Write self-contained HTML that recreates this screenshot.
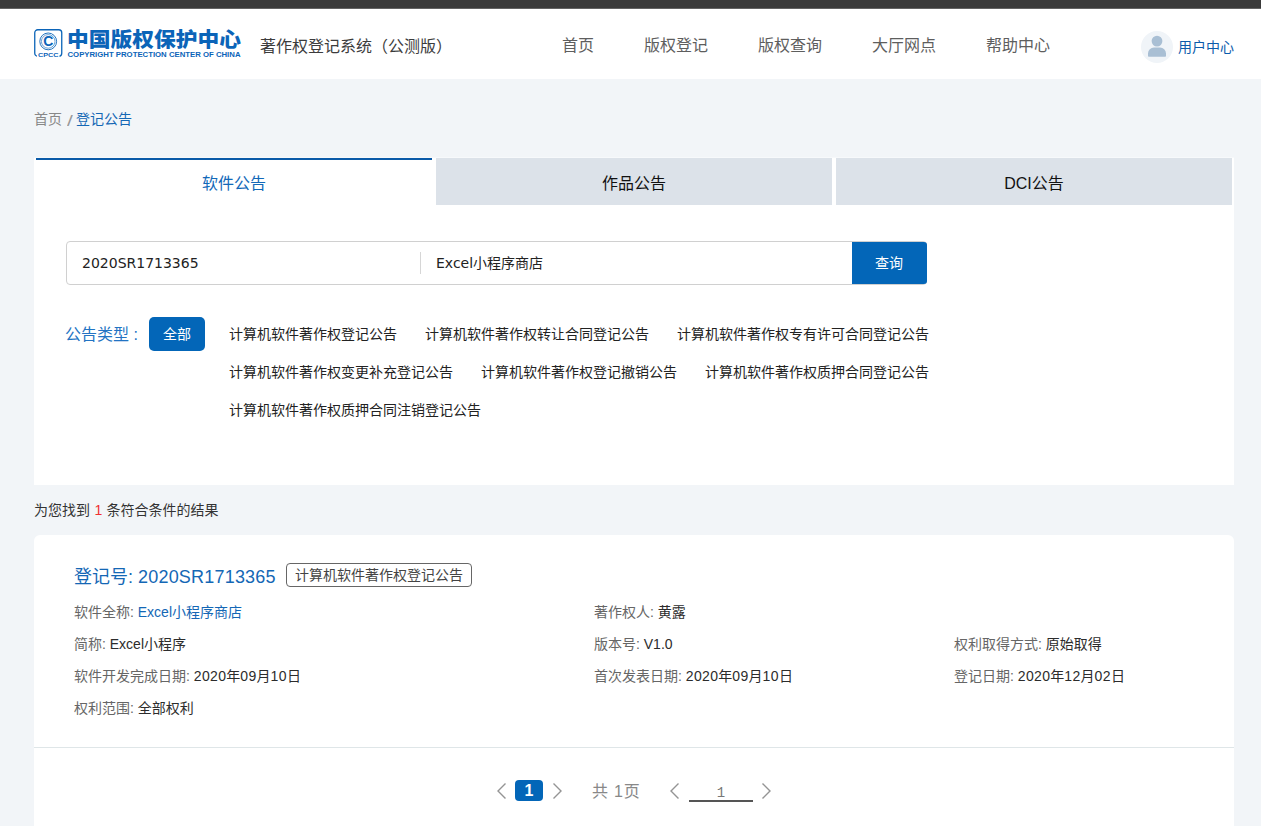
<!DOCTYPE html>
<html lang="zh-CN">
<head>
<meta charset="utf-8">
<title>登记公告 - 中国版权保护中心</title>
<style>
*{box-sizing:border-box;margin:0;padding:0}
html,body{width:1261px;height:826px;overflow:hidden}
body{background:#f2f5f8;font-family:"Liberation Sans","Noto Sans CJK SC",sans-serif;font-size:14px;color:#222;position:relative}
.abs{position:absolute;white-space:nowrap}
.topbar{left:0;top:0;width:1261px;height:9px;background:#3a3a3a;border-bottom:1px solid #636363}
.header{left:0;top:9px;width:1261px;height:70px;background:#fff}
.sys{left:260px;top:35px;font-size:16px;line-height:24px;color:#3c3c3c}
.nav{top:34px;font-size:16px;line-height:24px;color:#5e5e5e}
.avatar{left:1141px;top:31px;width:32px;height:32px;border-radius:50%;background:#f0f4f8;overflow:hidden}
.user{left:1178px;top:36px;font-size:14px;line-height:22px;color:#0b5bab}
.crumb{left:34px;top:108px;font-size:14px;line-height:22px;color:#888}
.crumb u{text-decoration:none;position:absolute;left:32.5px;top:1.5px;font-size:15.5px;color:#999;transform:scaleX(1.35);transform-origin:0 50%}
.crumb b{font-weight:normal;color:#1467b5;position:absolute;left:42px;top:0}
.panel1{left:34px;top:157px;width:1200px;height:328px;background:#fff;border-top:1px solid #f7f9fb}
.tab{top:158px;width:396px;height:47px;background:#dce2e9;font-size:16px;line-height:51px;text-align:center;color:#111;overflow:hidden}
.tab.on{background:#fff;border-top:2px solid #0a5aa8;color:#1268b8;line-height:47px}
.search{left:66px;top:241px;width:861px;height:44px;border:1px solid #d0d0d0;border-radius:4px;background:#fff}
.sdiv{left:420px;top:252px;width:1px;height:22px;background:#d6d6d6}
.inp{top:252px;font-family:"DejaVu Sans","Noto Sans CJK SC",sans-serif;font-size:14px;line-height:22px;color:#222}
.btn{left:852px;top:242px;width:75px;height:42px;background:#0366b8;color:#fff;font-size:14px;line-height:43px;text-align:center;border-radius:0 3px 3px 0;text-indent:-1px}
.ftitle{left:65px;top:323px;font-size:16px;line-height:24px;color:#2273c3}
.all{left:149px;top:317px;width:56px;height:34px;border-radius:5px;background:#0366b8;color:#fff;font-size:14px;line-height:35px;text-align:center}
.f{font-size:14px;line-height:22px;color:#222}
.found{left:34px;top:499px;font-size:14px;line-height:22px;color:#333;word-spacing:0.5px}
.found i{font-style:normal;color:#f03030}
.panel2{left:34px;top:535px;width:1200px;height:300px;background:#fff;border-radius:6px 6px 0 0}
.rtitle{left:74px;top:563px;font-size:18px;line-height:28px;color:#1467b5}
.rtitle span{letter-spacing:0.2px}
.tag{left:286px;top:563px;width:186px;height:24px;border:1px solid #666;border-radius:4px;font-size:14px;line-height:22px;text-align:center;color:#444}
.d{font-size:14px;line-height:22px;color:#2c2c2c}
.d span{color:#666}
.d b{font-weight:normal;color:#1467b5}
.d i{font-style:normal;letter-spacing:0.35px}
.hr{left:34px;top:747px;width:1200px;height:1px;background:#dfe6e8}
.pg{left:515px;top:780px;width:28px;height:21px;background:#0366b8;border-radius:4px;color:#fff;font-weight:bold;font-size:16px;line-height:21px;text-align:center}
.total{left:592px;top:780px;font-size:16px;line-height:24px;color:#888;word-spacing:1.5px}
.total i{font-style:normal;letter-spacing:1px}
.jump{left:689px;top:781px;width:64px;height:21px;border-bottom:2px solid #555;font-family:"Liberation Mono",monospace;font-size:14px;line-height:24px;color:#777;text-align:center}
svg{position:absolute;overflow:visible}
</style>
</head>
<body>
<div class="abs topbar"></div>
<div class="abs header"></div>

<!-- logo -->
<svg style="left:34px;top:29px" width="207" height="29" viewBox="0 0 207 29">
  <rect x="0.75" y="0.75" width="27" height="26.5" rx="3" fill="none" stroke="#0b64b8" stroke-width="1.3"/>
  <rect x="3" y="22.6" width="22.5" height="6" fill="#fff"/>
  <circle cx="14.2" cy="12.4" r="8.4" fill="none" stroke="#0b64b8" stroke-width="0.9"/>
  <circle cx="14.2" cy="12.4" r="6.8" fill="none" stroke="#0b64b8" stroke-width="0.6"/>
  <text x="14.2" y="17.4" text-anchor="middle" font-family="Liberation Sans, sans-serif" font-weight="bold" font-size="14" fill="#0b64b8">C</text>
  <text x="14.3" y="28" text-anchor="middle" font-family="Liberation Sans, sans-serif" font-weight="bold" font-size="5.8" textLength="20.5" lengthAdjust="spacingAndGlyphs" fill="#0b64b8">CPCC</text>
  <text x="33" y="17.6" font-family="Noto Sans CJK SC, sans-serif" font-weight="900" font-size="20.5" textLength="174" lengthAdjust="spacingAndGlyphs" fill="#0b64b8">中国版权保护中心</text>
  <text x="33.5" y="28" font-family="Liberation Sans, sans-serif" font-weight="bold" font-size="6.3" textLength="173" lengthAdjust="spacingAndGlyphs" fill="#0b64b8">COPYRIGHT PROTECTION CENTER OF CHINA</text>
</svg>

<div class="abs sys">著作权登记系统（公测版）</div>
<div class="abs nav" style="left:562px">首页</div>
<div class="abs nav" style="left:644px">版权登记</div>
<div class="abs nav" style="left:758px">版权查询</div>
<div class="abs nav" style="left:872px">大厅网点</div>
<div class="abs nav" style="left:986px">帮助中心</div>
<div class="abs avatar">
  <svg style="left:0;top:0" width="32" height="32" viewBox="0 0 32 32">
    <circle cx="16" cy="10.1" r="5.4" fill="#a9bfd4"/>
    <path d="M7 25 v-2.5 a6 6 0 0 1 6 -6 h6 a6 6 0 0 1 6 6 v2.5 a0.8 0.8 0 0 1 -0.8 0.8 h-16.4 a0.8 0.8 0 0 1 -0.8 -0.8z" fill="#a9bfd4"/>
  </svg>
</div>
<div class="abs user">用户中心</div>

<div class="abs crumb">首页<u>/</u><b>登记公告</b></div>

<div class="abs panel1"></div>
<div class="abs tab on" style="left:36px">软件公告</div>
<div class="abs tab" style="left:436px">作品公告</div>
<div class="abs tab" style="left:836px">DCI公告</div>

<div class="abs search"></div>
<div class="abs sdiv"></div>
<div class="abs inp" style="left:82px">2020SR1713365</div>
<div class="abs inp" style="left:436px">Excel小程序商店</div>
<div class="abs btn">查询</div>

<div class="abs ftitle">公告类型 :</div>
<div class="abs all">全部</div>
<div class="abs f" style="left:229px;top:323px">计算机软件著作权登记公告</div>
<div class="abs f" style="left:425px;top:323px">计算机软件著作权转让合同登记公告</div>
<div class="abs f" style="left:677px;top:323px">计算机软件著作权专有许可合同登记公告</div>
<div class="abs f" style="left:229px;top:361px">计算机软件著作权变更补充登记公告</div>
<div class="abs f" style="left:481px;top:361px">计算机软件著作权登记撤销公告</div>
<div class="abs f" style="left:705px;top:361px">计算机软件著作权质押合同登记公告</div>
<div class="abs f" style="left:229px;top:399px">计算机软件著作权质押合同注销登记公告</div>

<div class="abs found">为您找到 <i>1</i> 条符合条件的结果</div>

<div class="abs panel2"></div>
<div class="abs rtitle">登记号: <span>2020SR1713365</span></div>
<div class="abs tag">计算机软件著作权登记公告</div>

<div class="abs d" style="left:74px;top:601px"><span>软件全称:</span> <b>Excel小程序商店</b></div>
<div class="abs d" style="left:594px;top:601px"><span>著作权人:</span> 黄露</div>
<div class="abs d" style="left:74px;top:633px"><span>简称:</span> Excel小程序</div>
<div class="abs d" style="left:594px;top:633px"><span>版本号:</span> V1.0</div>
<div class="abs d" style="left:954px;top:633px"><span>权利取得方式:</span> 原始取得</div>
<div class="abs d" style="left:74px;top:665px"><span>软件开发完成日期:</span> <i>2020</i>年<i>09</i>月<i>10</i>日</div>
<div class="abs d" style="left:594px;top:665px"><span>首次发表日期:</span> <i>2020</i>年<i>09</i>月<i>10</i>日</div>
<div class="abs d" style="left:954px;top:665px"><span>登记日期:</span> <i>2020</i>年<i>12</i>月<i>02</i>日</div>
<div class="abs d" style="left:74px;top:697px"><span>权利范围:</span> 全部权利</div>

<div class="abs hr"></div>

<svg style="left:496px;top:783px" width="12" height="16" viewBox="0 0 12 16"><path d="M9.5 0.5 L2 8 L9.5 15.5" fill="none" stroke="#949494" stroke-width="1.4"/></svg>
<div class="abs pg">1</div>
<svg style="left:551px;top:783px" width="12" height="16" viewBox="0 0 12 16"><path d="M2.5 0.5 L10 8 L2.5 15.5" fill="none" stroke="#949494" stroke-width="1.4"/></svg>
<div class="abs total">共 <i>1</i>页</div>
<svg style="left:669px;top:783px" width="12" height="16" viewBox="0 0 12 16"><path d="M9.5 0.5 L2 8 L9.5 15.5" fill="none" stroke="#949494" stroke-width="1.4"/></svg>
<div class="abs jump">1</div>
<svg style="left:760px;top:783px" width="12" height="16" viewBox="0 0 12 16"><path d="M2.5 0.5 L10 8 L2.5 15.5" fill="none" stroke="#949494" stroke-width="1.4"/></svg>
</body>
</html>
